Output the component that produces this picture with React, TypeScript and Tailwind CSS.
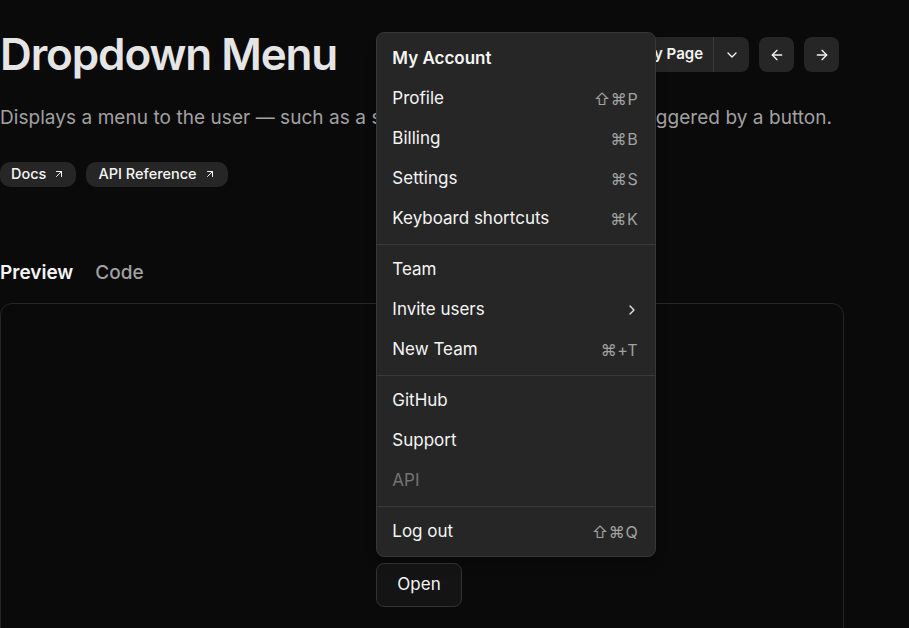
import { ArrowLeft, ArrowRight, ArrowUpRight, ChevronDown, ChevronRight, Copy } from 'lucide-react';

type Item = { label: string; shortcut?: string; sub?: boolean; disabled?: boolean };

const groups: Item[][] = [
  [
    { label: 'Profile', shortcut: '⇧⌘P' },
    { label: 'Billing', shortcut: '⌘B' },
    { label: 'Settings', shortcut: '⌘S' },
    { label: 'Keyboard shortcuts', shortcut: '⌘K' },
  ],
  [
    { label: 'Team' },
    { label: 'Invite users', sub: true },
    { label: 'New Team', shortcut: '⌘+T' },
  ],
  [{ label: 'GitHub' }, { label: 'Support' }, { label: 'API', disabled: true }],
  [{ label: 'Log out', shortcut: '⇧⌘Q' }],
];

function MenuItem({ item }: { item: Item }) {
  return (
    <div
      className={`flex h-10 items-center justify-between rounded-md px-[10px] text-[17px] ${
        item.disabled ? 'text-neutral-500' : 'text-neutral-100'
      }`}
    >
      <span>{item.label}</span>
      {item.shortcut && (
        <span className="pr-[2px] text-[16px] tracking-[0.04em] text-neutral-400">{item.shortcut}</span>
      )}
      {item.sub && <ChevronRight className="size-4 text-neutral-200" strokeWidth={2} />}
    </div>
  );
}

function Menu() {
  return (
    <div className="absolute bottom-full left-0 mb-[6px] w-[280px] rounded-lg border border-[#363636] bg-[#262626] px-[5px] pt-[6px] pb-[4px] shadow-lg">
      <div className="flex h-10 items-center px-[10px] text-[17px] font-semibold text-neutral-100">
        My Account
      </div>
      {groups.map((group, gi) => (
        <div key={gi}>
          {gi > 0 && <div className="-mx-[5px] my-[5px] h-px bg-[#3a3a3a]" />}
          {group.map((item) => (
            <MenuItem key={item.label} item={item} />
          ))}
        </div>
      ))}
    </div>
  );
}

export default function App() {
  return (
    <div
      className="min-h-[628px] overflow-hidden bg-[#0a0a0a] text-neutral-100"
      style={{ fontFamily: "Inter, 'DejaVu Sans', sans-serif" }}
    >
      <div className="w-[844px]">
        <div className="flex items-start justify-between pt-[30px]">
          <h1 className="text-[44px] leading-[48px] font-semibold tracking-[-0.025em] text-neutral-200">
            Dropdown Menu
          </h1>
          <div className="mt-[7px] flex items-center gap-[10px] pr-[5px]">
            <div className="flex h-[35px] items-center rounded-lg bg-[#262626]">
              <div className="flex h-full items-center gap-2 pr-[10px] pl-3 text-[15px] font-semibold text-neutral-100">
                <Copy className="size-4" />
                Copy Page
              </div>
              <div className="h-full w-px bg-[#3a3a3a]" />
              <div className="flex h-full w-[35px] items-center justify-center">
                <ChevronDown className="size-4" />
              </div>
            </div>
            <div className="flex size-[35px] items-center justify-center rounded-lg bg-[#262626]">
              <ArrowLeft className="size-4" />
            </div>
            <div className="flex size-[35px] items-center justify-center rounded-lg bg-[#262626]">
              <ArrowRight className="size-4" />
            </div>
          </div>
        </div>

        <p className="mt-[26px] text-[19px] tracking-[0.003em] text-neutral-400">
          Displays a menu to the user — such as a set of actions or functions — triggered by a button.
        </p>

        <div className="mt-[29px] flex gap-[10px]">
          <span className="flex h-[25px] items-center gap-[7px] rounded-[10px] bg-[#262626] px-[11px] text-[14.5px] font-medium">
            Docs
            <ArrowUpRight className="size-3" />
          </span>
          <span className="flex h-[25px] items-center gap-[7px] rounded-[10px] bg-[#262626] px-3 text-[14.5px] font-medium">
            API Reference
            <ArrowUpRight className="size-3" />
          </span>
        </div>

        <div className="mt-[72px] flex gap-[22px] text-[19px] font-semibold">
          <span className="text-neutral-100">Preview</span>
          <span className="font-medium text-neutral-400">Code</span>
        </div>

        <div className="mt-[16px] flex h-[564px] items-center justify-center rounded-xl border border-[#262626] pr-[6px]">
          <div className="relative">
            <Menu />
            <button className="h-[44px] rounded-lg border border-[#333333] bg-[#141414] px-[20px] text-[17px] text-neutral-100">
              Open
            </button>
          </div>
        </div>
      </div>
    </div>
  );
}
